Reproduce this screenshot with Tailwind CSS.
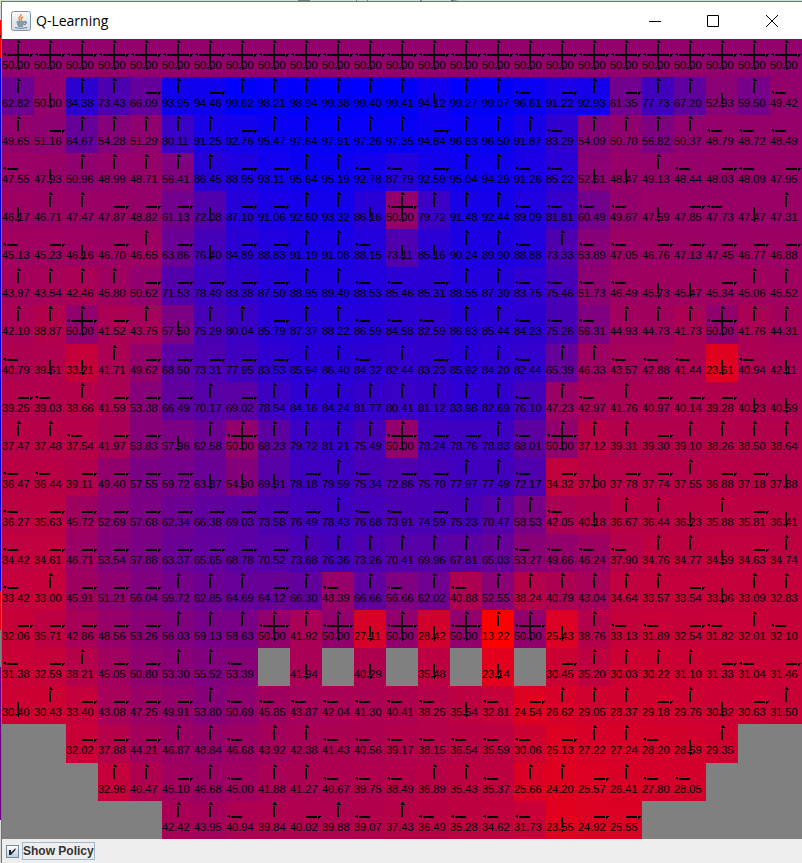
<!DOCTYPE html>
<html lang="en">
<head>
<meta charset="utf-8">
<title>Q-Learning</title>
<script src="https://cdn.jsdelivr.net/npm/@tailwindcss/browser@4"></script>
</head>
<body class="flex min-h-screen flex-col bg-[#d9d9d9] font-['Liberation_Sans',Arial,sans-serif]">
<svg class="hidden" aria-hidden="true">
  <symbol id="U" viewBox="0 0 32 38"><path d="M16 1h1v1h1v1h1v1h-4v-2h1zM15 5h2v11h-2z"/></symbol>
  <symbol id="D" viewBox="0 0 32 38"><path d="M15 16h2v11h-2zM13 28h5v1h-1v2h-1v-2h-3z"/></symbol>
  <symbol id="L" viewBox="0 0 32 38"><path d="M5 15h11v2h-11zM1 15h1v-1h2v3h-1v-1h-2z"/></symbol>
  <symbol id="R" viewBox="0 0 32 38"><path d="M16 15h11v2h-11zM28 15h3v1h-1v1h-1v1h-1z"/></symbol>
  <symbol id="A" viewBox="0 0 32 38"><use href="#U"/><use href="#D"/><use href="#L"/><use href="#R"/></symbol>
</svg>

<div class="flex h-px w-full shrink-0" aria-hidden="true">
  <div class="w-[298px]"></div><div class="w-3 bg-[#808080]"></div><div class="w-[46px]"></div><div class="w-px bg-[#808080]"></div><div class="w-[10px]"></div><div class="w-px bg-[#808080]"></div><div class="w-[52px]"></div><div class="w-0.5 bg-[#808080]"></div><div class="w-[29px]"></div><div class="w-2 bg-linear-to-r from-[#606060] to-[#d9d9d9]"></div>
</div>

<div class="flex grow">
  <div class="flex w-px shrink-0 flex-col" aria-hidden="true">
    <div class="h-[19px]"></div><div class="h-[15px] bg-[#ff0000]"></div><div class="h-0.5 bg-black"></div><div class="h-[21px] bg-[#ff0000]"></div><div class="h-[533px] bg-[#0000e0]"></div><div class="h-[39px] bg-[#e80010]"></div><div class="h-[37px] bg-[#808080]"></div><div class="h-[153px] bg-[#6a0080]"></div>
  </div>

  <main class="flex min-w-0 grow flex-col border-t border-l border-[#5b6fc4] bg-[#eeeeee]">
    <header class="flex h-[37px] items-center bg-white pl-[9px]">
      <svg class="size-5" viewBox="0 0 20 20" aria-hidden="true">
        <defs><linearGradient id="tile" x2="0" y2="1"><stop stop-color="#fafafa"/><stop offset="1" stop-color="#d3d8de"/></linearGradient></defs>
        <rect x=".5" y=".5" width="19" height="19" rx="2" fill="url(#tile)" stroke="#7f95a9"/>
        <path d="M10 3c1 2-3 3-2 5 0 1 1 2 1 2M12 6c-2 1-3 2-1 4" fill="none" stroke="#e8853c" stroke-width="1.4"/>
        <path d="M5.500 11h8c1-1 3 0 1 2l-1.500.6M6 13h7M7 15h5" fill="none" stroke="#64829e" stroke-width="1.3"/>
        <path d="M4 16.500c3 1 9 1 12 0" fill="none" stroke="#64829e"/>
      </svg>
      <h1 class="ml-[5px] grow font-['Open_Sans','Noto_Sans',sans-serif] text-[14px] leading-5 text-black">Q-Learning</h1>
      <button type="button" aria-label="Minimize" class="flex h-9 w-[58px] items-center justify-center"><svg class="size-3" viewBox="0 0 12 12"><path d="M0 6h12v1H0z"/></svg></button>
      <button type="button" aria-label="Maximize" class="flex h-9 w-[58px] items-center justify-center"><svg class="size-3" viewBox="0 0 12 12" fill="none" stroke="#000"><path d="M.5.5h11v11H.5z"/></svg></button>
      <button type="button" aria-label="Close" class="flex h-9 w-[60px] items-center justify-center"><svg class="size-3" viewBox="0 0 12 12" fill="none" stroke="#000"><path d="M0 0l12 12M12 0L0 12"/></svg></button>
    </header>

    <table class="w-full table-fixed border-collapse bg-[#808080] text-[11px] leading-3 text-black" aria-label="State values and policy">
      <tbody id="grid"></tbody>
    </table>

    <footer class="flex h-6 items-center bg-[#eeeeee] pl-1">
      <span class="relative flex">
        <input id="policy" type="checkbox" checked class="size-[13px] appearance-none border border-[#7a8a99] bg-linear-to-b from-white to-[#b8cfe5]">
        <svg class="pointer-events-none absolute inset-0 size-[13px]" viewBox="0 0 13 13" aria-hidden="true"><path d="M3 5h2v2.500L9.500 3v2L5 10H3z" fill="#222"/></svg>
      </span>
      <label for="policy" class="ml-[3px] border border-[#a3b8cc] text-[12px] leading-4 font-bold text-[#333333]">Show Policy</label>
    </footer>
  </main>
</div>

<script>
// Each state is its value followed by the greedy action: U, D, L, R, or A when all actions tie. "-" is a wall.
const rows = `
50.00A 50.00A 50.00A 50.00A 50.00A 50.00A 50.00A 50.00A 50.00A 50.00A 50.00A 50.00A 50.00A 50.00A 50.00A 50.00A 50.00A 50.00A 50.00A 50.00A 50.00A 50.00A 50.00A 50.00A 50.00A
62.82U 50.00D 84.38U 73.43U 66.09R 93.95U 94.46R 99.62U 98.21U 98.94U 99.38U 99.40U 99.41U 94.12D 99.27U 99.07U 96.61L 91.22R 92.93U 61.35R 77.73U 67.20U 52.93D 59.50U 49.42L
49.65U 51.16R 64.67U 54.28U 51.29U 80.11U 91.25U 92.76R 95.47U 97.64U 97.91U 97.26U 97.35U 94.84R 96.83U 96.50U 91.87U 83.29L 54.09U 50.70U 56.82U 50.37U 48.79L 48.72L 48.49L
47.55L 47.93D 50.96U 48.99U 48.71U 56.41U 86.45U 88.95R 93.11R 95.64U 95.19U 92.78L 87.79L 92.59R 95.04U 94.29U 91.26L 85.22L 52.61D 48.47D 49.13U 48.44L 48.03R 48.09L 47.95R
46.17D 46.71U 47.47U 47.87R 48.82R 61.13R 72.08D 87.10R 91.06R 92.60U 93.32U 86.16D 50.00A 79.72U 91.48U 92.44U 89.09L 81.81L 60.49L 49.67L 47.59D 47.85R 47.73L 47.47D 47.31U
45.13L 45.23R 46.16D 46.70R 46.65U 63.86R 76.40D 84.89R 88.83R 91.19U 91.08U 88.15L 73.11D 85.16D 90.24U 89.90U 88.88L 73.33U 53.89L 47.05L 46.76R 47.13R 47.45R 46.77R 46.88R
43.97U 43.54U 42.46U 45.80U 50.62R 71.53R 78.49R 83.38R 87.50R 88.95U 89.49U 88.53L 85.46L 85.31R 88.55U 87.30U 83.75L 75.46L 51.73L 46.49L 45.73D 45.47D 45.34R 45.06U 45.52U
42.10U 38.87U 50.00A 41.52R 43.75U 57.50D 75.29U 80.04U 85.79R 87.37U 88.22U 86.59L 84.58L 82.59L 86.63U 85.44U 84.23L 75.26L 56.31L 44.93U 44.73U 41.73U 50.00A 41.76U 44.31U
40.79L 39.61D 33.21D 41.71U 49.62R 68.50R 73.31R 77.95R 83.53R 85.94U 86.40U 84.32L 82.44U 83.23R 85.92U 84.20U 82.44L 65.39U 46.33U 43.57L 42.88L 41.44L 23.61D 40.94L 42.11D
39.25R 39.03L 38.66U 41.59R 53.38R 66.49R 70.17U 69.02R 78.54U 84.16U 84.24U 81.77U 80.41U 81.12U 83.98U 82.69U 76.10L 47.23U 42.97L 41.76U 40.97R 40.14R 39.28R 40.23D 40.59D
37.47U 37.48U 37.54L 41.97R 53.83R 57.96D 62.58U 50.00A 68.23U 79.72U 81.21U 75.49U 50.00A 78.24R 78.76R 78.83U 68.01L 50.00A 37.12U 39.31U 39.30R 39.10U 38.26U 38.50U 38.64U
36.47L 36.44L 39.11R 49.40R 57.55R 59.72R 63.87D 54.90D 69.91D 78.18R 79.59U 75.34L 72.86R 75.70R 77.97U 77.49U 72.17L 34.32R 37.00D 37.78R 37.74R 37.55U 36.88R 37.18R 37.88D
36.27L 35.63R 45.72R 52.69R 57.68R 62.34R 66.38R 69.03R 73.58R 76.49R 78.43U 76.68L 73.91L 74.59R 75.23U 70.47U 58.53U 42.05L 40.18D 36.67U 36.44U 36.23D 35.88U 35.81R 36.41D
34.42L 34.61R 46.71R 53.54R 57.88R 63.37R 65.65R 68.78R 70.52R 73.68U 76.36U 73.26U 70.41U 69.96U 67.81U 65.03U 53.27L 49.66L 46.24L 37.90L 34.76U 34.77U 34.59D 34.63R 34.74U
33.42L 33.00U 45.91R 51.21R 56.04R 59.72U 62.85U 64.69U 64.12R 66.30U 48.39L 66.66U 56.66L 62.02U 40.88L 52.55U 38.24U 40.79U 43.04U 34.64U 33.57U 33.54R 33.06D 33.09U 32.83U
32.06R 35.71R 42.86R 48.56R 53.26R 56.03U 59.13U 58.63U 50.00A 41.92U 50.00A 27.11D 50.00A 28.42D 50.00A 13.22U 50.00A 25.43D 38.76U 33.13L 31.89L 32.54R 31.82L 32.01U 32.10L
31.38L 32.59R 38.21U 45.05R 50.80R 53.30U 55.52U 53.39L - 41.94D - 40.29D - 35.48D - 23.14D - 30.45R 35.20U 30.03U 30.22U 31.10U 31.33R 31.04L 31.46R
30.40D 30.43U 33.40R 43.08R 47.25R 49.91R 53.80U 50.69L 45.85L 43.87L 42.04L 41.30L 40.41L 38.25L 35.54D 32.81L 24.54R 26.62U 29.05U 28.37U 29.18R 29.76U 30.82D 30.63R 31.50U
- - 32.02R 37.88R 44.21R 46.87U 48.84U 46.68L 43.92U 42.38U 41.43L 40.56L 39.17L 38.15L 36.54L 35.59L 30.06L 25.13R 27.22U 27.24U 28.20L 28.59D 29.35U - -
- - - 32.96U 40.47U 45.10R 46.68U 45.00L 41.88U 41.27U 40.67L 39.75L 38.49L 36.89U 35.43U 35.37L 25.66U 24.20U 25.57R 26.41U 27.80L 28.05L - - -
- - - - - 42.42U 43.95U 40.94L 39.84U 40.02R 39.88U 39.07L 37.43U 36.49L 35.28L 34.62L 31.73L 23.55D 24.92R 25.55R - - - - -
`.trim().split('\n').map(line => line.split(' '));

const MIN = 13.22, MAX = 99.62;
document.getElementById('grid').innerHTML = rows.map((row, i) => {
  const height = i === 7 || i === 18 ? 'h-[39px]' : 'h-[38px]';
  return `<tr class="${height}">` + row.map(state => {
    if (state === '-') return '<td class="p-0"></td>';
    const value = state.slice(0, -1), action = state.slice(-1);
    const blue = Math.round(255 * (value - MIN) / (MAX - MIN));
    return `<td class="p-0 align-top" style="background:rgb(${255 - blue},0,${blue})"><div class="grid"><span class="[grid-area:1/1] pt-5">${value}</span><svg class="h-[38px] w-8 [grid-area:1/1]" shape-rendering="crispEdges" aria-hidden="true"><use href="#${action}"/></svg></div></td>`;
  }).join('') + '</tr>';
}).join('');

const policy = document.getElementById('policy');
policy.addEventListener('change', () => {
  document.querySelectorAll('#grid svg').forEach(arrow => arrow.classList.toggle('invisible', !policy.checked));
});
</script>
</body>
</html>
